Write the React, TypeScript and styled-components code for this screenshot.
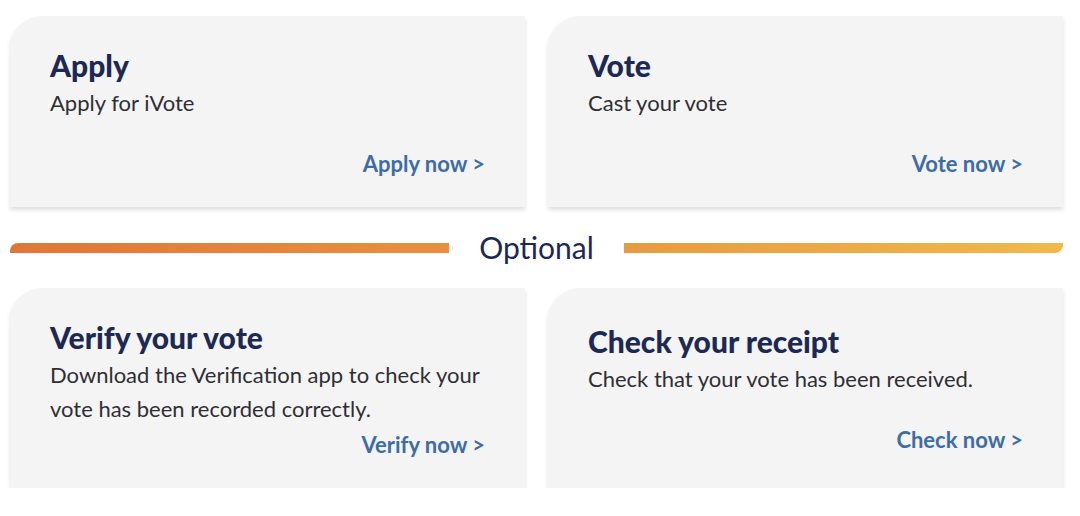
import { FC } from 'react';
import styled, { createGlobalStyle } from 'styled-components';

const COLOR_NAVY = '#1c2954';
const COLOR_TEXT = '#2f2f33';
const COLOR_LINK = '#3e6ca7';
const COLOR_CARD = '#f4f4f5';

const GlobalStyle = createGlobalStyle`
  html, body {
    margin: 0;
    padding: 0;
    background: #ffffff;
    font-family: Lato, 'Open Sans', Arial, sans-serif;
  }
`;

const StyledPage = styled.div`
  width: 1053px;
  padding: 16px 0 0 10px;
  display: grid;
  grid-template-columns: 1fr 1fr;
  column-gap: 23px;
  row-gap: 23px;
`;

const StyledCard = styled.div<{ $height: number; $padTop: number; $padBottom: number }>`
  display: flex;
  flex-direction: column;
  box-sizing: border-box;
  height: ${({ $height }) => $height}px;
  padding: ${({ $padTop }) => $padTop}px 40px ${({ $padBottom }) => $padBottom}px 40px;
  background: ${COLOR_CARD};
  border-radius: 32px 0 0 0;
  box-shadow: 0 3px 4px rgba(0, 0, 0, 0.13);
`;

const StyledTitle = styled.h2`
  margin: 0;
  font-size: 30px;
  line-height: 36px;
  font-weight: 900;
  color: ${COLOR_NAVY};
`;

const StyledText = styled.p`
  margin: 3px 0 0 0;
  font-size: 22px;
  line-height: 34px;
  color: ${COLOR_TEXT};
`;

const StyledLink = styled.a`
  margin-top: auto;
  align-self: flex-end;
  font-size: 22px;
  line-height: 28px;
  font-weight: 700;
  color: ${COLOR_LINK};
  text-decoration: none;
  cursor: pointer;
`;

const StyledDivider = styled.div`
  grid-column: 1 / -1;
  display: flex;
  align-items: center;
  gap: 30px;
`;

const StyledBar = styled.div<{ $from: string; $to: string; $radius: string }>`
  flex: 1;
  height: 10px;
  background: linear-gradient(90deg, ${({ $from }) => $from}, ${({ $to }) => $to});
  border-radius: ${({ $radius }) => $radius};
`;

const StyledDividerLabel = styled.span`
  font-size: 30px;
  line-height: 35px;
  color: ${COLOR_NAVY};
`;

type TStep = {
  title: string;
  text: string;
  link: string;
};

const topSteps: TStep[] = [
  { title: 'Apply', text: 'Apply for iVote', link: 'Apply now >' },
  { title: 'Vote', text: 'Cast your vote', link: 'Vote now >' },
];

const StepCard: FC<{ step: TStep; height: number; padTop?: number; padBottom?: number }> = ({
  step,
  height,
  padTop = 31,
  padBottom = 29,
}) => (
  <StyledCard $height={height} $padTop={padTop} $padBottom={padBottom}>
    <StyledTitle>{step.title}</StyledTitle>
    <StyledText>{step.text}</StyledText>
    <StyledLink>{step.link}</StyledLink>
  </StyledCard>
);

const App: FC = () => {
  return (
    <>
      <GlobalStyle />
      <StyledPage>
        {topSteps.map((step) => (
          <StepCard key={step.title} step={step} height={191} />
        ))}

        <StyledDivider>
          <StyledBar $from='#e07637' $to='#e8903f' $radius='8px 0 0 0' />
          <StyledDividerLabel>Optional</StyledDividerLabel>
          <StyledBar $from='#e89a40' $to='#f1b94a' $radius='0 0 8px 0' />
        </StyledDivider>

        <StepCard
          step={{
            title: 'Verify your vote',
            text: 'Download the Verification app to check your vote has been recorded correctly.',
            link: 'Verify now >',
          }}
          height={200}
        />
        <StepCard
          step={{
            title: 'Check your receipt',
            text: 'Check that your vote has been received.',
            link: 'Check now >',
          }}
          height={200}
          padTop={35}
          padBottom={34}
        />
      </StyledPage>
    </>
  );
};

export default App;
